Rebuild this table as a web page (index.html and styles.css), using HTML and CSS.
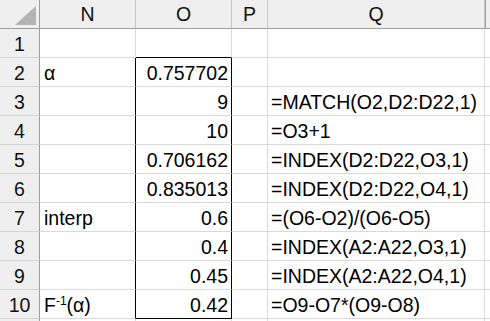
FILE: index.html
```html
<!DOCTYPE html>
<html>
<head>
<meta charset="utf-8">
<link rel="stylesheet" href="styles.css">
</head>
<body>
<div class="sheet">
  <div class="corner"><span class="tri"></span></div>
  <div class="ch">N</div>
  <div class="ch">O</div>
  <div class="ch">P</div>
  <div class="ch">Q</div>
  <div class="ch ch-last"></div>

  <div class="rh">1</div><div class="c"></div><div class="c top"></div><div class="c"></div><div class="c"></div><div class="c"></div>
  <div class="rh">2</div><div class="c in">α</div><div class="c num bx">0.757702</div><div class="c"></div><div class="c"></div><div class="c"></div>
  <div class="rh">3</div><div class="c in"></div><div class="c num bx">9</div><div class="c"></div><div class="c f">=MATCH(O2,D2:D22,1)</div><div class="c"></div>
  <div class="rh">4</div><div class="c in"></div><div class="c num bx">10</div><div class="c"></div><div class="c f">=O3+1</div><div class="c"></div>
  <div class="rh">5</div><div class="c in"></div><div class="c num bx">0.706162</div><div class="c"></div><div class="c f">=INDEX(D2:D22,O3,1)</div><div class="c"></div>
  <div class="rh">6</div><div class="c in"></div><div class="c num bx">0.835013</div><div class="c"></div><div class="c f">=INDEX(D2:D22,O4,1)</div><div class="c"></div>
  <div class="rh">7</div><div class="c in">interp</div><div class="c num bx">0.6</div><div class="c"></div><div class="c f">=(O6-O2)/(O6-O5)</div><div class="c"></div>
  <div class="rh">8</div><div class="c in"></div><div class="c num bx">0.4</div><div class="c"></div><div class="c f">=INDEX(A2:A22,O3,1)</div><div class="c"></div>
  <div class="rh">9</div><div class="c in"></div><div class="c num bx">0.45</div><div class="c"></div><div class="c f">=INDEX(A2:A22,O4,1)</div><div class="c"></div>
  <div class="rh">10</div><div class="c in">F<sup class="sup">-1</sup>(α)</div><div class="c num bx bot">0.42</div><div class="c"></div><div class="c f">=O9-O7*(O9-O8)</div><div class="c"></div>
  <div class="rh"></div><div class="c"></div><div class="c"></div><div class="c"></div><div class="c"></div><div class="c"></div>
</div>
</body>
</html>
```
FILE: styles.css
```css
html, body {
  margin: 0;
  padding: 0;
  background: #ffffff;
  overflow: hidden;
}
.sheet {
  display: grid;
  grid-template-columns: 40px 96px 96px 36px 217px 20px;
  grid-template-rows: repeat(12, 29px);
  font-family: "Liberation Sans", Arial, sans-serif;
  font-size: 19.5px;
  color: #000;
  width: 505px;
}
.corner, .ch, .rh, .c {
  box-sizing: border-box;
  line-height: 19px;
  white-space: nowrap;
  overflow: hidden;
}
.corner {
  background: #efefef;
  border-right: 1px solid #9e9e9e;
  border-bottom: 1px solid #9e9e9e;
  display: flex;
  align-items: flex-end;
  justify-content: flex-end;
  padding: 0 3px 3px 0;
}
.tri {
  width: 21px;
  height: 19px;
  background: #b4b4b4;
  clip-path: polygon(100% 0, 100% 100%, 0 100%);
}
.ch {
  background: #efefef;
  border-right: 1px solid #c6c6c6;
  border-bottom: 1px solid #9e9e9e;
  text-align: center;
  padding-top: 5px;
  color: #111;
}
.ch-last {
  border-left: 1px solid #9e9e9e;
}
.rh {
  background: #efefef;
  border-right: 1px solid #9e9e9e;
  border-bottom: 1px solid #d4d4d4;
  text-align: center;
  padding-top: 6px;
  color: #111;
}
.c {
  border-right: 1px solid #d9d9d9;
  border-bottom: 1px solid #d9d9d9;
  padding: 6px 3px 0 4px;
}
.c.in {
  border-right-color: #000;
}
.c.top {
  border-bottom-color: #000;
}
.c.bx {
  border-right-color: #000;
}
.c.bot {
  border-bottom-color: #000;
}
.num {
  text-align: right;
}
.f {
  padding-left: 3px;
}
.sup {
  font-size: 12px;
  vertical-align: 7px;
  line-height: 0;
}
```
